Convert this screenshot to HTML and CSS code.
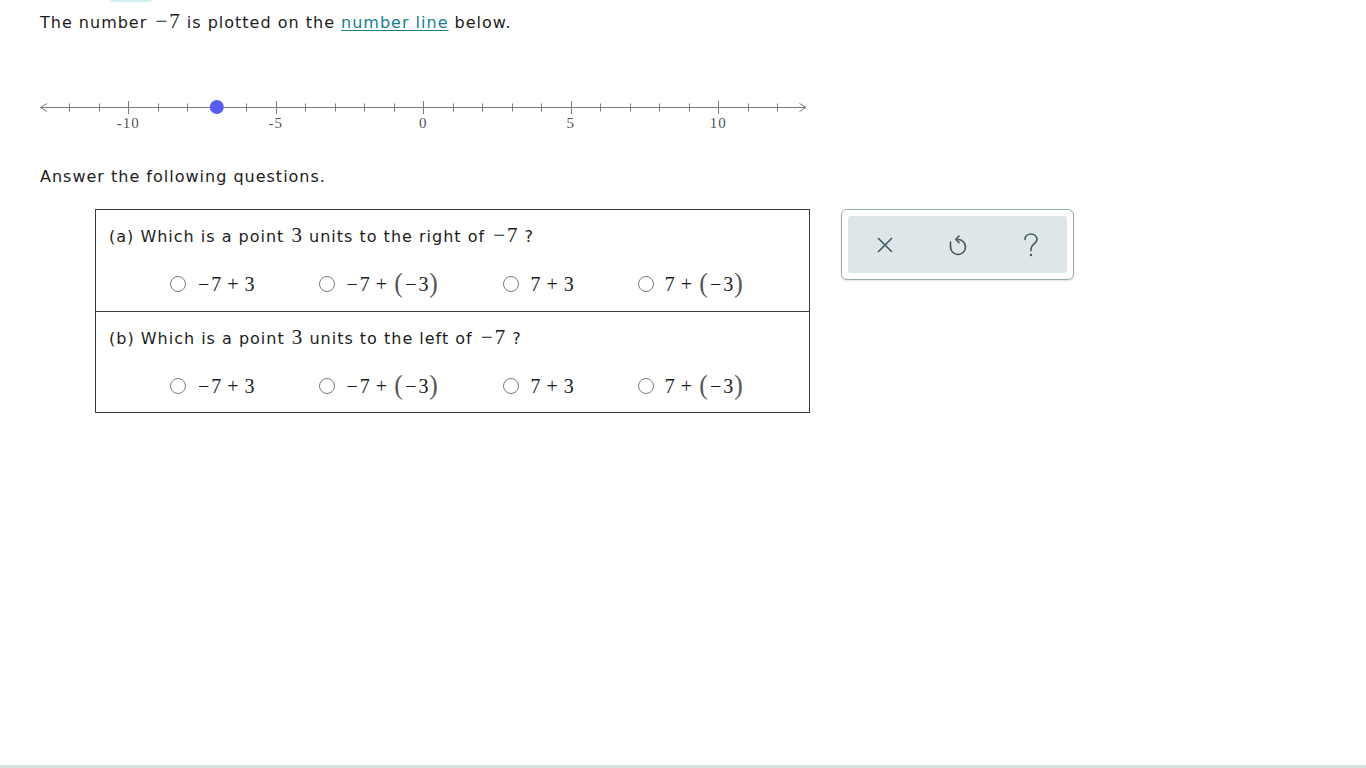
FILE: index.html
```html
<!DOCTYPE html>
<html lang="en">
<head>
<meta charset="utf-8">
<title>Number line</title>
<link rel="stylesheet" href="styles.css">
</head>
<body>
<div class="app">
  <main class="page">
    <span class="top-tab"></span>
    <p class="intro">The number <span class="m"><span class="neg">−</span>7</span> is plotted on the <a class="link" href="#">number line</a> below.</p>

    <svg class="numline" width="780" height="46" viewBox="0 0 780 46" aria-label="number line">
      <g stroke="#7a7a7a" stroke-width="1" fill="none">
        <line x1="0.5" y1="15.5" x2="766" y2="15.5"/>
        <polyline points="7,11.5 0.5,15.5 7,19.5"/>
        <polyline points="759.5,11.5 766,15.5 759.5,19.5"/>
      </g>
      <g stroke="#7a7a7a" stroke-width="1" id="ticks"></g>
      <g class="nl-labels" fill="#555" font-family="'Liberation Serif','DejaVu Serif',serif" font-size="15" text-anchor="middle">
        <text x="88.3" y="36">-10</text>
        <text x="235.8" y="36">-5</text>
        <text x="383.3" y="36">0</text>
        <text x="530.8" y="36">5</text>
        <text x="678.3" y="36">10</text>
      </g>
      <circle cx="176.8" cy="15" r="7" fill="#5a5cf0"/>
    </svg>

    <p class="prompt">Answer the following questions.</p>

    <div class="work">
      <div class="qbox">
        <section class="qrow">
          <p class="qtext">(a) Which is a point <span class="m">3</span> units to the right of <span class="m"><span class="neg">−</span>7</span> ?</p>
          <div class="opts">
            <label class="opt"><span class="radio"></span><span class="m"><span class="neg">−</span>7<span class="bin">+</span>3</span></label>
            <label class="opt"><span class="radio"></span><span class="m"><span class="neg">−</span>7<span class="bin">+</span><span class="par">(</span><span class="neg">−</span>3<span class="par">)</span></span></label>
            <label class="opt"><span class="radio"></span><span class="m">7<span class="bin">+</span>3</span></label>
            <label class="opt"><span class="radio"></span><span class="m">7<span class="bin">+</span><span class="par">(</span><span class="neg">−</span>3<span class="par">)</span></span></label>
          </div>
        </section>
        <section class="qrow">
          <p class="qtext">(b) Which is a point <span class="m">3</span> units to the left of <span class="m"><span class="neg">−</span>7</span> ?</p>
          <div class="opts">
            <label class="opt"><span class="radio"></span><span class="m"><span class="neg">−</span>7<span class="bin">+</span>3</span></label>
            <label class="opt"><span class="radio"></span><span class="m"><span class="neg">−</span>7<span class="bin">+</span><span class="par">(</span><span class="neg">−</span>3<span class="par">)</span></span></label>
            <label class="opt"><span class="radio"></span><span class="m">7<span class="bin">+</span>3</span></label>
            <label class="opt"><span class="radio"></span><span class="m">7<span class="bin">+</span><span class="par">(</span><span class="neg">−</span>3<span class="par">)</span></span></label>
          </div>
        </section>
      </div>

      <div class="tools">
        <div class="tools-inner">
          <button class="tool" aria-label="Clear">
            <svg width="20" height="20" viewBox="0 0 20 20"><path d="M3.5 3.5 L16.5 16.5 M16.5 3.5 L3.5 16.5" stroke="#3f5a60" stroke-width="1.6" fill="none" stroke-linecap="round"/></svg>
          </button>
          <button class="tool" aria-label="Undo">
            <svg width="22" height="24" viewBox="0 0 22 24"><path d="M11 6.5 A7.5 7.5 0 1 1 3.5 14" stroke="#3f5a60" stroke-width="1.6" fill="none" stroke-linecap="round"/><path d="M12 3 L8.8 6.5 L12 9.6" stroke="#3f5a60" stroke-width="1.6" fill="none" stroke-linecap="round" stroke-linejoin="round"/><path d="M3.5 14 L3.5 9" stroke="#3f5a60" stroke-width="1.6" fill="none" stroke-linecap="round"/></svg>
          </button>
          <button class="tool" aria-label="Help">
            <svg width="20" height="26" viewBox="0 0 20 26"><path d="M4 7.5 C4 3.8 7 2 10 2 C13.3 2 16 4.2 16 7.3 C16 10.2 13.8 11.3 12.3 12.6 C10.9 13.8 10 14.8 10 17.2 V18.6" stroke="#3f5a60" stroke-width="1.6" fill="none" stroke-linecap="round"/><circle cx="10" cy="23" r="1.2" fill="#3f5a60"/></svg>
          </button>
        </div>
      </div>
    </div>
  </main>
  <div class="footer-bar"></div>
</div>
<script>
(function(){
  var g=document.getElementById('ticks');var ns='http://www.w3.org/2000/svg';
  for(var n=-12;n<=12;n++){
    var x=383.3+29.5*n;var major=(n%5===0);
    var l=document.createElementNS(ns,'line');
    var xx=Math.round(x)+0.5;
    l.setAttribute('x1',xx);l.setAttribute('x2',xx);
    l.setAttribute('y1',major?9:11.5);l.setAttribute('y2',major?22:19.5);
    g.appendChild(l);
  }
})();
</script>
</body>
</html>
```
FILE: styles.css
```css
* { box-sizing: border-box; }
html, body { margin: 0; padding: 0; background: #fff; }
body {
  font-family: "DejaVu Sans", Verdana, sans-serif;
  font-size: 16px;
  letter-spacing: 1px;
  color: #1c1c1c;
}
.app {
  min-height: 100vh;
  display: flex;
  flex-direction: column;
}
.page {
  position: relative;
  flex: 1;
  padding: 9px 0 0 40px;
}
.top-tab {
  position: absolute;
  left: 108px;
  top: -10px;
  width: 46px;
  height: 12px;
  border-radius: 6px;
  background: #d3eff1;
}
.intro, .prompt, .qtext {
  margin: 0;
  line-height: 24px;
}
.m {
  font-family: "Liberation Serif", "DejaVu Serif", serif;
  font-size: 20px;
  line-height: 24px;
  letter-spacing: 0;
  color: #1c1c1c;
}
.intro .m, .qtext .m {
  font-size: 21px;
  padding: 0 1px;
}
.neg { padding: 0 2px 0 1px; }
.bin { padding: 0 6px; }
.par {
  font-size: 27px;
  color: #555;
  line-height: 20px;
  display: inline-block;
  padding: 0 1px;
  transform: translateY(1px) scaleX(0.95);
}
.link {
  color: #177f8c;
  text-decoration: underline;
  text-underline-offset: 2px;
}
.numline {
  display: block;
  margin-top: 57px;
  overflow: visible;
}
.prompt {
  margin-top: 27px;
}
.work {
  display: flex;
  align-items: flex-start;
  margin-top: 20px;
  margin-left: 55px;
}
.qbox {
  width: 715px;
  border: 1px solid #3a3a3a;
}
.qrow {
  height: 101px;
  padding: 13px 0 0 13px;
}
.qrow + .qrow {
  border-top: 1px solid #3a3a3a;
  height: 101px;
}
.opts {
  display: flex;
  gap: 64px;
  margin-top: 21px;
  padding-left: 61px;
  height: 28px;
  align-items: center;
}
.opt {
  display: flex;
  align-items: center;
  gap: 11px;
  cursor: pointer;
}
.radio {
  width: 16px;
  height: 16px;
  border: 1px solid #7a7a7a;
  border-radius: 50%;
  background: #fff;
  flex: none;
}
.tools {
  margin-left: 31px;
  width: 233px;
  height: 71px;
  border: 1px solid #9aabb0;
  border-radius: 6px;
  padding: 6px;
  background: #fff;
  box-shadow: 0 1px 2px rgba(120, 140, 145, 0.25);
}
.tools-inner {
  height: 100%;
  background: #dfe6e8;
  border-radius: 3px;
  display: flex;
}
.tool {
  flex: 1;
  border: 0;
  background: transparent;
  display: flex;
  align-items: center;
  justify-content: center;
  padding: 0;
  cursor: pointer;
}
.footer-bar {
  height: 3px;
  background: #d3e2df;
}
```
